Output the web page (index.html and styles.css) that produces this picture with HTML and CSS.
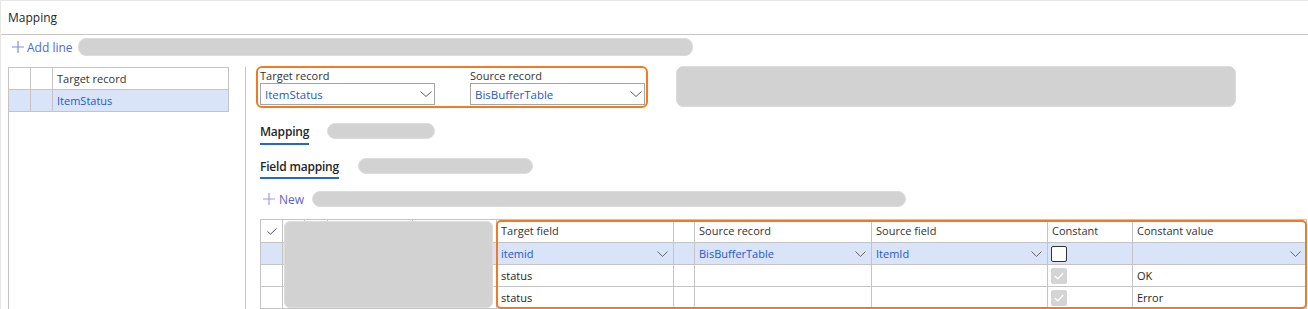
FILE: index.html
```html
<!DOCTYPE html>
<html lang="en">
<head>
<meta charset="UTF-8">
<title>Mapping</title>
<link rel="stylesheet" href="styles.css">
</head>
<body>
<div class="page">
    <div class="title">Mapping</div>

    <div class="toolbar">
        <span class="cmd">
            <svg class="plus" width="12" height="12" viewBox="0 0 12 12"><path d="M6 0v12M0 6h12" stroke="#7d8ce6" stroke-width="1.2" fill="none"/></svg>
            Add line
        </span>
        <span class="blur bar-add"></span>
    </div>

    <div class="main">
        <!-- lista de registros -->
        <div class="list-pane">
            <div class="lrow head">
                <div></div><div></div><div>Target record</div>
            </div>
            <div class="lrow sel">
                <div></div><div></div><div class="link">ItemStatus</div>
            </div>
        </div>

        <div class="detail">
            <div class="rec-row">
                <div class="rec-box">
                    <div class="field">
                        <label>Target record</label>
                        <div class="combo">
                            <span class="link">ItemStatus</span>
                            <svg class="chev" width="12" height="6" viewBox="0 0 12 6"><path d="M0.5 0.5L6 5.5L11.5 0.5" stroke="#5c5c5c" fill="none"/></svg>
                        </div>
                    </div>
                    <div class="field">
                        <label>Source record</label>
                        <div class="combo">
                            <span class="link">BisBufferTable</span>
                            <svg class="chev" width="12" height="6" viewBox="0 0 12 6"><path d="M0.5 0.5L6 5.5L11.5 0.5" stroke="#5c5c5c" fill="none"/></svg>
                        </div>
                    </div>
                </div>
                <div class="blur blur-big"></div>
            </div>

            <div class="tab-row first">
                <span class="tab">Mapping</span>
                <span class="blur pill-1"></span>
            </div>

            <div class="tab-row second">
                <span class="tab">Field mapping</span>
                <span class="blur pill-2"></span>
            </div>

            <div class="new-row">
                <span class="cmd cmd-new">
                    <svg class="plus" width="12" height="12" viewBox="0 0 12 12"><path d="M6 0v12M0 6h12" stroke="#a09ae6" stroke-width="1.2" fill="none"/></svg>
                    New
                </span>
                <span class="blur bar-new"></span>
            </div>

            <!-- grilla de campos -->
            <div class="fgrid">
                <div class="frow head">
                    <div class="mark"><svg width="10" height="7" viewBox="0 0 10 7"><path d="M0.5 3.5L3.5 6.2L9.5 0.5" stroke="#4a4f6a" fill="none"/></svg></div>
                    <div></div><div></div><div></div><div></div>
                    <div>Target field</div>
                    <div></div>
                    <div>Source record</div>
                    <div>Source field</div>
                    <div>Constant</div>
                    <div>Constant value</div>
                </div>
                <div class="frow sel">
                    <div></div><div></div><div></div><div></div><div></div>
                    <div class="dd"><span class="link">itemid</span><svg width="11" height="6" viewBox="0 0 11 6"><path d="M0.5 0.5L5.5 5.5L10.5 0.5" stroke="#666" fill="none"/></svg></div>
                    <div></div>
                    <div class="dd"><span class="link">BisBufferTable</span><svg width="11" height="6" viewBox="0 0 11 6"><path d="M0.5 0.5L5.5 5.5L10.5 0.5" stroke="#666" fill="none"/></svg></div>
                    <div class="dd"><span class="link">ItemId</span><svg width="11" height="6" viewBox="0 0 11 6"><path d="M0.5 0.5L5.5 5.5L10.5 0.5" stroke="#666" fill="none"/></svg></div>
                    <div class="chk-cell"><span class="chk"></span></div>
                    <div class="dd"><span></span><svg width="11" height="6" viewBox="0 0 11 6"><path d="M0.5 0.5L5.5 5.5L10.5 0.5" stroke="#666" fill="none"/></svg></div>
                </div>
                <div class="frow">
                    <div></div><div></div><div></div><div></div><div></div>
                    <div>status</div>
                    <div></div><div></div><div></div>
                    <div class="chk-cell"><span class="chk off"><svg width="10" height="8" viewBox="0 0 10 8"><path d="M0.8 4L3.8 6.8L9.2 1" stroke="#fff" stroke-width="1.2" fill="none"/></svg></span></div>
                    <div>OK</div>
                </div>
                <div class="frow">
                    <div></div><div></div><div></div><div></div><div></div>
                    <div>status</div>
                    <div></div><div></div><div></div>
                    <div class="chk-cell"><span class="chk off"><svg width="10" height="8" viewBox="0 0 10 8"><path d="M0.8 4L3.8 6.8L9.2 1" stroke="#fff" stroke-width="1.2" fill="none"/></svg></span></div>
                    <div>Error</div>
                </div>

                <div class="mask"></div>
                <div class="hl"></div>
            </div>
        </div>
    </div>
</div>
</body>
</html>
```

FILE: styles.css
```css
/* Estilos generales */
* {
    box-sizing: border-box;
}

body {
    margin: 0;
    background-color: #fff;
    font-family: "Open Sans", "Noto Sans", sans-serif;
    font-size: 11px;
    color: #262626;
}

.page {
    height: 309px;
    overflow: hidden;
    border-top: 1px solid #e6e6e6;
    border-left: 1px solid #e6e6e6;
}

.title {
    height: 34px;
    line-height: 33px;
    padding-left: 7px;
    font-size: 12px;
    border-bottom: 1px solid #c6c6c6;
}

.link {
    color: #2458d0;
}

.blur {
    display: block;
    background-color: #d2d2d2;
    border: 1px solid #dcdcdc;
    flex: none;
}

/* Barra de comandos */
.toolbar {
    display: flex;
    align-items: flex-start;
    height: 21px;
    padding: 3px 0 0 11px;
}

.cmd {
    display: flex;
    align-items: center;
    height: 18px;
    font-size: 12px;
    color: #4f67d8;
    white-space: nowrap;
}

.cmd .plus {
    margin-right: 3px;
}

.bar-add {
    margin-left: 5px;
    width: 615px;
    height: 18px;
    border-radius: 8px;
}

.main {
    display: flex;
    align-items: flex-start;
    margin-top: 10px;
}

/* Panel izquierdo */
.list-pane {
    flex: none;
    width: 238px;
    height: 260px;
    margin: 1px 0 0 7px;
    border-left: 1px solid #c4c4c4;
    border-right: 1px solid #c4c4c4;
}

.lrow {
    display: grid;
    grid-template-columns: 22px 22px 176px;
    width: 220px;
    height: 22px;
}

.lrow.head {
    height: 23px;
    border-top: 1px solid #c4c4c4;
    color: #333;
}

.lrow > div {
    border-right: 1px solid #c4c4c4;
    border-bottom: 1px solid #c4c4c4;
    padding-left: 4px;
    line-height: 21px;
    white-space: nowrap;
}

.lrow.sel > div {
    background-color: #d9e4f8;
}

/* Detalle */
.detail {
    flex: 1;
    margin-left: 10px;
}

.rec-row {
    display: flex;
    align-items: flex-start;
}

.rec-box {
    display: flex;
    gap: 35px;
    width: 392px;
    height: 42px;
    padding: 0 1px 1px 2px;
    border: 2px solid #f17a22;
    border-radius: 6px;
}

.field {
    width: 175px;
}

.field label {
    display: block;
    height: 15px;
    line-height: 15px;
    color: #333;
}

.combo {
    display: flex;
    align-items: center;
    justify-content: space-between;
    height: 22px;
    padding: 0 2px 0 4px;
    border: 1px solid #a5a5a5;
    font-size: 11.5px;
}

.blur-big {
    margin-left: 28px;
    width: 560px;
    height: 41px;
    border-radius: 7px;
}

.tab-row {
    display: flex;
    align-items: flex-start;
    margin-left: 4px;
}

.tab-row.first {
    margin-top: 15px;
}

.tab-row.second {
    margin-top: 13px;
}

.tab {
    padding-top: 1px;
    padding-bottom: 3px;
    line-height: 16px;
    font-size: 12px;
    font-weight: 600;
    letter-spacing: -0.2px;
    border-bottom: 2px solid #2463dc;
}

.tab-row.second .tab {
    padding-bottom: 2px;
}

.pill-1 {
    margin-left: 18px;
    width: 108px;
    height: 16px;
    border-radius: 8px;
}

.pill-2 {
    margin-left: 19px;
    width: 175px;
    height: 16px;
    border-radius: 8px;
}

.new-row {
    display: flex;
    align-items: center;
    height: 16px;
    margin: 12px 0 0 7px;
}

.cmd-new {
    color: #6461d6;
}

.cmd-new .plus {
    margin-right: 4px;
}

.bar-new {
    margin-left: 8px;
    width: 594px;
    height: 16px;
    border-radius: 8px;
}

/* Grilla de mapeo */
.fgrid {
    position: relative;
    display: grid;
    grid-template-columns: 22px 22px 23px 85px 84px 177px 21px 177px 176px 85px 174px;
    grid-template-rows: 23px 22px 22px 22px;
    width: 1047px;
    margin: 12px 0 0 4px;
    border-left: 1px solid #c4c4c4;
    border-top: 1px solid #c4c4c4;
}

.frow {
    display: contents;
}

.frow > div {
    border-right: 1px solid #c4c4c4;
    border-bottom: 1px solid #c4c4c4;
    padding-left: 4px;
    line-height: 21px;
    white-space: nowrap;
    overflow: hidden;
}

.frow.head > div {
    color: #333;
    line-height: 22px;
}

.frow.sel > div {
    background-color: #d9e4f8;
}

.frow .mark {
    display: flex;
    align-items: center;
    padding-left: 6px;
}

.frow .dd {
    display: flex;
    align-items: center;
    justify-content: space-between;
    padding-right: 5px;
}

.frow .chk-cell {
    display: flex;
    align-items: center;
    padding-left: 3px;
}

.chk {
    display: flex;
    align-items: center;
    justify-content: center;
    width: 16px;
    height: 16px;
    border: 1px solid #333;
    border-radius: 2px;
    background-color: #fff;
}

.chk.off {
    border-color: #d4d4d4;
    background-color: #d4d4d4;
}

/* capas encima de la grilla */
.mask {
    position: absolute;
    left: 23px;
    top: 1px;
    width: 209px;
    height: 87px;
    border-radius: 6px;
    background-color: #d2d2d2;
    border: 1px solid #dcdcdc;
}

.hl {
    position: absolute;
    left: 235px;
    top: 0;
    width: 811px;
    height: 89px;
    border: 2px solid #f17a22;
    border-radius: 5px;
}
```
